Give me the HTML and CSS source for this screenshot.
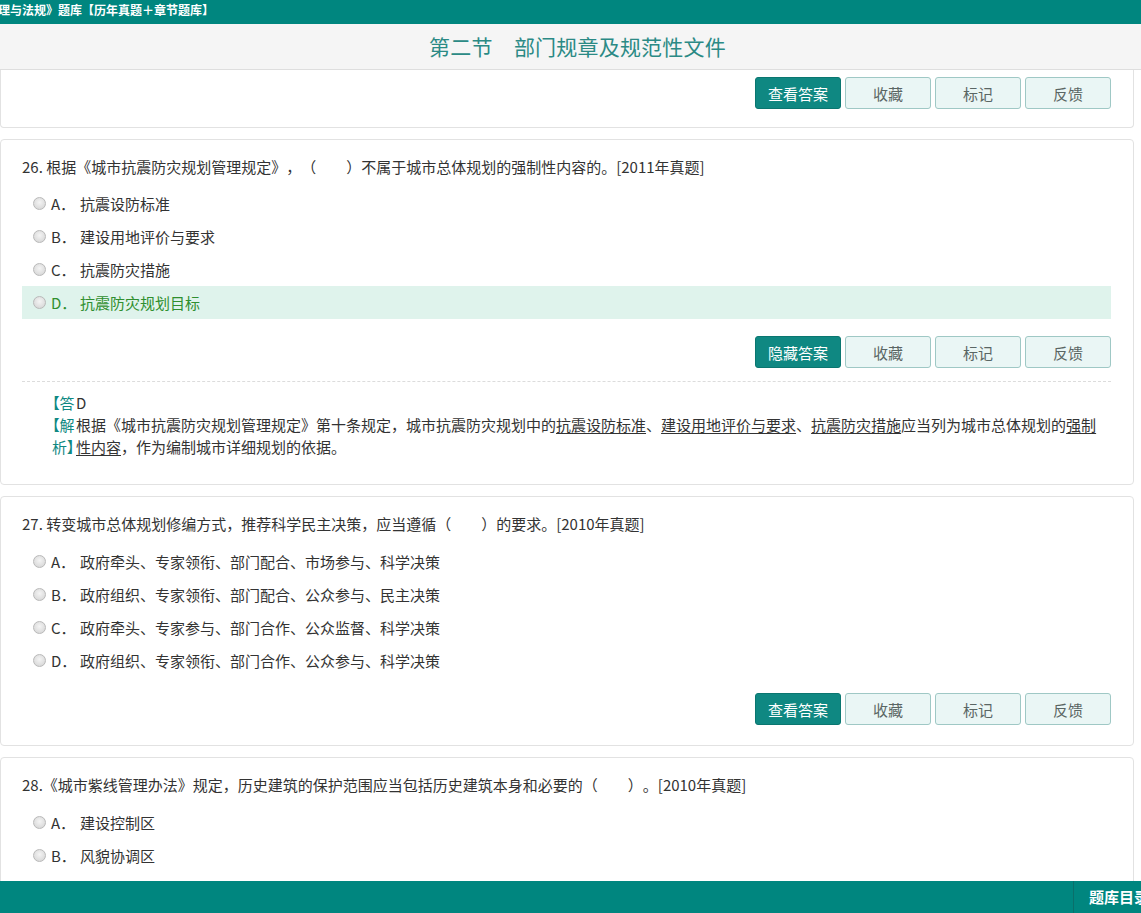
FILE: index.html
```html
<!DOCTYPE html>
<html lang="zh-CN">
<head>
<meta charset="utf-8">
<title>题库</title>
<link rel="stylesheet" href="styles.css">
</head>
<body>
<div class="topbar"><div class="topbar-title"><span>《城乡规划管理与法规》题库【历年真题＋章节题库】</span></div></div>
<div class="titlebar">第二节　部门规章及规范性文件</div>

<div class="list">
  <div class="card card-partial">
    <div class="actions">
      <button class="btn btn-primary">查看答案</button>
      <button class="btn">收藏</button>
      <button class="btn">标记</button>
      <button class="btn">反馈</button>
    </div>
  </div>

  <div class="card">
    <div class="question">26. 根据《城市抗震防灾规划管理规定》，（　　）不属于城市总体规划的强制性内容的。[2011年真题]</div>
    <div class="options options-first">
      <div class="option"><span class="radio"></span><span class="opt-key">A．</span><span>抗震设防标准</span></div>
      <div class="option"><span class="radio"></span><span class="opt-key">B．</span><span>建设用地评价与要求</span></div>
      <div class="option"><span class="radio"></span><span class="opt-key">C．</span><span>抗震防灾措施</span></div>
      <div class="option option-right"><span class="radio"></span><span class="opt-key">D．</span><span>抗震防灾规划目标</span></div>
    </div>
    <div class="actions actions-first">
      <button class="btn btn-primary">隐藏答案</button>
      <button class="btn">收藏</button>
      <button class="btn">标记</button>
      <button class="btn">反馈</button>
    </div>
    <div class="answer">
      <div class="answer-line"><span class="label label-clip">【答案】</span>D</div>
      <div class="answer-line"><span class="label">【解析】</span>根据《城市抗震防灾规划管理规定》第十条规定，城市抗震防灾规划中的<u>抗震设防标准</u>、<u>建设用地评价与要求</u>、<u>抗震防灾措施</u>应当列为城市总体规划的<u>强制性内容</u>，作为编制城市详细规划的依据。</div>
    </div>
  </div>

  <div class="card">
    <div class="question">27. 转变城市总体规划修编方式，推荐科学民主决策，应当遵循（　　）的要求。[2010年真题]</div>
    <div class="options">
      <div class="option"><span class="radio"></span><span class="opt-key">A．</span><span>政府牵头、专家领衔、部门配合、市场参与、科学决策</span></div>
      <div class="option"><span class="radio"></span><span class="opt-key">B．</span><span>政府组织、专家领衔、部门配合、公众参与、民主决策</span></div>
      <div class="option"><span class="radio"></span><span class="opt-key">C．</span><span>政府牵头、专家参与、部门合作、公众监督、科学决策</span></div>
      <div class="option"><span class="radio"></span><span class="opt-key">D．</span><span>政府组织、专家领衔、部门合作、公众参与、科学决策</span></div>
    </div>
    <div class="actions">
      <button class="btn btn-primary">查看答案</button>
      <button class="btn">收藏</button>
      <button class="btn">标记</button>
      <button class="btn">反馈</button>
    </div>
  </div>

  <div class="card">
    <div class="question">28.《城市紫线管理办法》规定，历史建筑的保护范围应当包括历史建筑本身和必要的（　　）。[2010年真题]</div>
    <div class="options">
      <div class="option"><span class="radio"></span><span class="opt-key">A．</span><span>建设控制区</span></div>
      <div class="option"><span class="radio"></span><span class="opt-key">B．</span><span>风貌协调区</span></div>
      <div class="option"><span class="radio"></span><span class="opt-key">C．</span><span>历史风貌区</span></div>
      <div class="option"><span class="radio"></span><span class="opt-key">D．</span><span>环境协调区</span></div>
    </div>
    <div class="actions">
      <button class="btn btn-primary">查看答案</button>
      <button class="btn">收藏</button>
      <button class="btn">标记</button>
      <button class="btn">反馈</button>
    </div>
  </div>
</div>

<div class="footer">
  <div class="footer-spacer"></div>
  <div class="footer-menu">题库目录</div>
</div>
</body>
</html>
```

FILE: styles.css
```css
html, body {
  margin: 0;
  padding: 0;
  height: 913px;
  overflow: hidden;
  background: #fff;
  font-family: "Noto Sans CJK SC", "Microsoft YaHei", sans-serif;
  font-size: 15px;
  color: #333;
  text-spacing-trim: space-all;
}

.topbar {
  height: 24px;
  background: #00867f;
}
.topbar-title {
  width: 214px;
  height: 20px;
  display: flex;
  justify-content: flex-end;
  overflow: hidden;
  white-space: nowrap;
  color: #fff;
  font-weight: bold;
  font-size: 12px;
  line-height: 20px;
}

.titlebar {
  height: 45px;
  line-height: 45px;
  background: #f5f5f5;
  border-bottom: 1px solid #dedede;
  text-align: center;
  color: #2b8a85;
  font-size: 21px;
  padding-left: 14px;
  letter-spacing: 0.2px;
}

.list {
  padding-right: 7px;
}

.card {
  border: 1px solid #e2e2e2;
  border-radius: 4px;
  background: #fff;
  padding: 16px 22px 20px 21px;
  margin-bottom: 11px;
}
.card-partial {
  border-top: none;
  border-radius: 0 0 4px 4px;
  padding-top: 7px;
  padding-bottom: 18px;
}
.card-partial .actions {
  margin-top: 0;
}

.question {
  line-height: 22px;
  white-space: nowrap;
}

.options {
  margin-top: 10px;
}
.options-first {
  margin-top: 9px;
}
.option {
  height: 33px;
  display: flex;
  align-items: center;
  padding-left: 11px;
  color: #333;
}
.option-right {
  background: #dff3ec;
  color: #2f8f2f;
}
.radio {
  width: 11px;
  height: 11px;
  border-radius: 50%;
  border: 1px solid #b9b9b9;
  background: radial-gradient(circle at 50% 40%, #f4f4f4 0%, #dcdcdc 70%, #cfcfcf 100%);
  margin-right: 5px;
  flex: none;
}
.opt-key {
  width: 29px;
  flex: none;
}

.actions {
  display: flex;
  justify-content: flex-end;
  gap: 4px;
  margin-top: 16px;
}
.actions-first {
  margin-top: 17px;
}
.btn {
  width: 86px;
  height: 32px;
  border: 1px solid #9fc8c5;
  border-radius: 3px;
  background: #eaf6f5;
  color: #5a6664;
  font-family: inherit;
  font-size: 15px;
  padding: 0;
  cursor: pointer;
}
.btn-primary {
  background: #0f8882;
  border-color: #0a7670;
  color: #fff;
}

.answer {
  margin-top: 13px;
  border-top: 1px dashed #dcdcdc;
  padding: 10px 6px 6px 30px;
  line-height: 22px;
}
.answer-line::after {
  content: "";
  display: block;
  clear: both;
}
.label {
  float: left;
  width: 24px;
  color: #0f8882;
  font-feature-settings: "palt";
  word-break: break-all;
}
.label-clip {
  height: 22px;
  overflow: hidden;
}
.answer u {
  text-decoration: underline;
  text-underline-offset: 2px;
}

.footer {
  position: fixed;
  left: 0;
  right: 0;
  bottom: 0;
  height: 32px;
  background: #00867f;
  display: flex;
  overflow: hidden;
}
.footer-spacer {
  width: 1073px;
  flex: none;
}
.footer-menu {
  flex: none;
  border-left: 1px solid #0a6f6a;
  padding-left: 15px;
  width: 90px;
  color: #fff;
  font-weight: bold;
  font-size: 15px;
  line-height: 32px;
  white-space: nowrap;
}
```
